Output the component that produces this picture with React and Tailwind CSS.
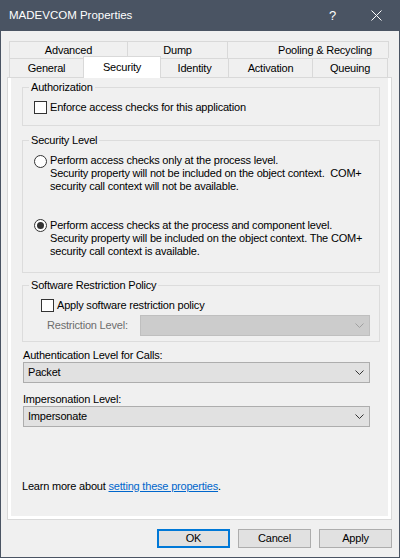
import React from 'react'

const Checkbox = () => (
    <span className="block w-[13px] h-[13px] border border-[#333333] bg-white shrink-0" />
)

const Radio = ({ checked, className = '' }) => (
    <span className={`flex w-[13px] h-[13px] rounded-full border border-[#333333] bg-white shrink-0 items-center justify-center ${className}`}>
        {checked && <span className="block w-[7px] h-[7px] rounded-full bg-[#333333]" />}
    </span>
)

const Chevron = ({ color }) => (
    <svg width="9" height="5" viewBox="0 0 9 5" className="shrink-0">
        <polyline points="0.5,0.5 4.5,4.5 8.5,0.5" fill="none" stroke={color} strokeWidth="1" />
    </svg>
)

const Combo = ({ value, disabled, className = '' }) => (
    <div className={`flex items-center justify-between h-[21px] border pl-[4px] pr-[5px] ${disabled ? 'bg-[#cccccc] border-[#bfbfbf]' : 'bg-[#e1e1e1] border-[#adadad]'} ${className}`}>
        <span>{value}</span>
        <Chevron color={disabled ? '#a0a0a0' : '#333333'} />
    </div>
)

const Group = ({ title, className = '', children }) => (
    <fieldset className={`border border-[#dcdcdc] ml-[11px] w-[358px] ${className}`}>
        <legend className="ml-[6px] px-[2px] leading-[14px]">{title}</legend>
        {children}
    </fieldset>
)

const Tab = ({ label, className = '' }) => (
    <div className={`flex items-center justify-center border-t border-r border-[#d9d9d9] ${className}`}>
        {label}
    </div>
)

export default function App() {
    return (
        <div className="w-[400px] h-[558px] bg-[#f0f0f0] border-x border-b border-[#4a5463] text-[11px] tracking-[-0.2px] text-black font-['Liberation_Sans',Arial,sans-serif] flex flex-col">
            {/* title bar */}
            <div className="h-[31px] -mx-px bg-[#4a5463] flex items-center text-white shrink-0">
                <span className="ml-[9px] text-[11.5px] tracking-normal">MADEVCOM Properties</span>
                <span className="ml-auto text-[13px] mr-[35px]">?</span>
                <svg width="11" height="11" viewBox="0 0 11 11" className="mr-[18px]">
                    <path d="M0.5 0.5 L10.5 10.5 M10.5 0.5 L0.5 10.5" stroke="white" strokeWidth="1" />
                </svg>
            </div>

            {/* tabs */}
            <div className="mt-[10px] ml-[8px] flex flex-col">
                <div className="flex h-[17px]">
                    <Tab label="Advanced" className="w-[119px] border-l" />
                    <Tab label="Dump" className="w-[100px]" />
                    <Tab label="Pooling & Recycling" className="w-[161px] justify-start pl-[50px]" />
                </div>
                <div className="flex h-[19px] items-end">
                    <Tab label="General" className="w-[75px] h-[19px] border-l" />
                    <div className="relative z-10 w-[78px] -ml-px h-[22px] -mb-px bg-white border-t border-x border-[#d9d9d9] flex justify-center pt-[2px]">
                        Security
                    </div>
                    <Tab label="Identity" className="w-[68px] h-[19px]" />
                    <Tab label="Activation" className="w-[84px] h-[19px]" />
                    <Tab label="Queuing" className="w-[75px] h-[19px]" />
                </div>
            </div>

            {/* page */}
            <div className="ml-[6px] w-[385px] h-[443px] border border-[#d9d9d9] shrink-0">
                <div className="h-full border-x-[3px] border-b-[3px] border-white flex flex-col">
                    <Group title="Authorization" className="mt-[2px] h-[46px]">
                        <div className="flex items-center mt-[7px] ml-[11px] gap-[3px]">
                            <Checkbox />
                            <span className="leading-[13px]">Enforce access checks for this application</span>
                        </div>
                    </Group>

                    <Group title="Security Level" className="mt-[7px] h-[140px]">
                        <div className="flex items-start mt-[7px] ml-[11px] gap-[3px] leading-[13px]">
                            <Radio className="mt-px" />
                            <div>
                                Perform access checks only at the process level.<br />
                                Security property will not be included on the object context.&nbsp; COM+<br />
                                security call context will not be available.
                            </div>
                        </div>
                        <div className="flex items-start mt-[26px] ml-[11px] gap-[3px] leading-[13px]">
                            <Radio checked />
                            <div>
                                Perform access checks at the process and component level.<br />
                                Security property will be included on the object context. The COM+<br />
                                security call context is available.
                            </div>
                        </div>
                    </Group>

                    <Group title="Software Restriction Policy" className="mt-[5px] h-[64px]">
                        <div className="flex items-center mt-[7px] ml-[18px] gap-[3px]">
                            <Checkbox />
                            <span className="leading-[13px]">Apply software restriction policy</span>
                        </div>
                        <div className="flex items-center mt-[3px] ml-[24px]">
                            <span className="w-[93px] text-[#6d6d6d]">Restriction Level:</span>
                            <Combo disabled className="w-[230px]" />
                        </div>
                    </Group>

                    <div className="mt-[6px] ml-[12px] leading-[14px]">Authentication Level for Calls:</div>
                    <Combo value="Packet" className="ml-[12px] w-[347px]" />

                    <div className="mt-[9px] ml-[12px] leading-[14px]">Impersonation Level:</div>
                    <Combo value="Impersonate" className="ml-[12px] w-[347px]" />

                    <div className="mt-[52px] ml-[11px] leading-[14px]">
                        Learn more about <span className="text-[#0066cc] underline">setting these properties</span>.
                    </div>
                </div>
            </div>

            {/* buttons */}
            <div className="mt-[9px] flex justify-end gap-[8px] pr-[7px]">
                <button className="w-[73px] h-[19px] border-2 border-[#0078d7] bg-[#e1e1e1] flex items-center justify-center text-[11px]">OK</button>
                <button className="w-[73px] h-[19px] border border-[#adadad] bg-[#e1e1e1] flex items-center justify-center text-[11px]">Cancel</button>
                <button className="w-[73px] h-[19px] border border-[#adadad] bg-[#e1e1e1] flex items-center justify-center text-[11px]">Apply</button>
            </div>
        </div>
    )
}
